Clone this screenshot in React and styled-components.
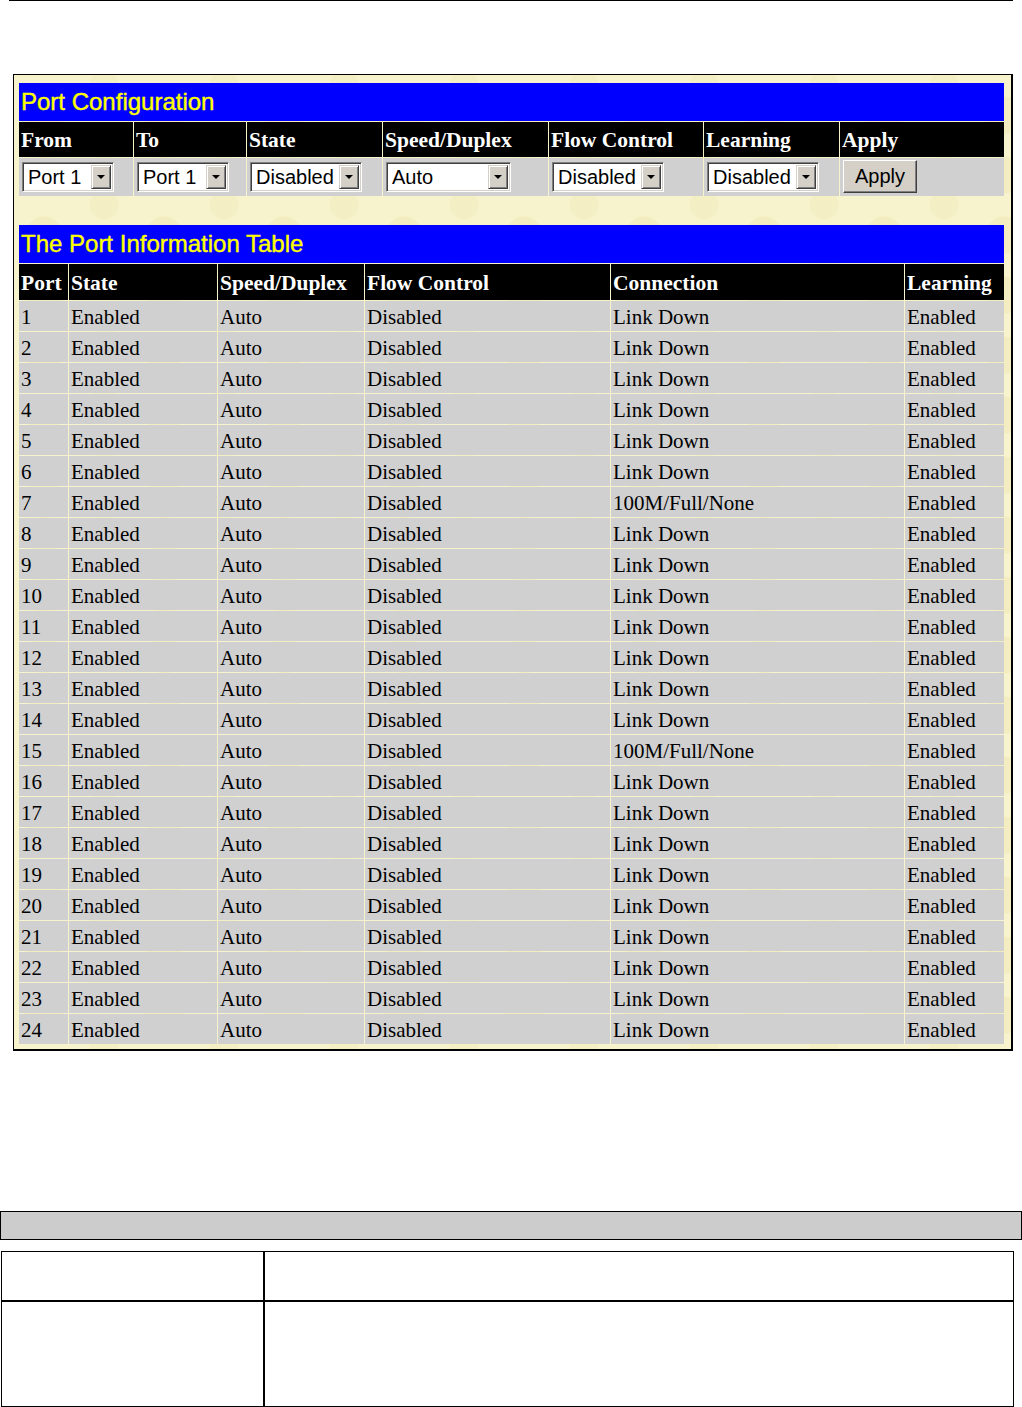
import React from "react";
import styled, { createGlobalStyle } from "styled-components";

const Global = createGlobalStyle`
  html, body { margin: 0; padding: 0; background: #fff; overflow: hidden; }
  body { font-family: "Liberation Serif", serif; }
`;

const Page = styled.div`
  width: 1022px;
  height: 1407px;
  display: flex;
  flex-direction: column;
`;

const TopRule = styled.div`
  margin-left: 9px;
  width: 1004px;
  height: 1px;
  background: #000;
`;

const Panel = styled.div`
  margin: 73px 0 0 13px;
  width: 1000px;
  box-sizing: border-box;
  border-style: solid;
  border-color: #000;
  border-width: 1px 2px 2px 1px;
  padding: 8px 7px 5px 5px;
  background-color: #f7f3cc;
  background-image:
    radial-gradient(circle at 30px 40px, rgba(235,225,170,0.35) 0 18px, transparent 19px),
    radial-gradient(circle at 90px 10px, rgba(235,225,170,0.25) 0 14px, transparent 15px);
  background-size: 120px 60px;
  display: flex;
  flex-direction: column;
`;

const Grid = styled.div`
  display: grid;
  grid-template-columns: ${(p) => p.$cols};
  column-gap: 1px;
  row-gap: 1px;
`;

const TitleBar = styled.div`
  grid-column: 1 / -1;
  height: 38px;
  background: #0000ff;
  color: #ffff00;
  font-family: "Liberation Sans", Arial, sans-serif;
  font-size: 24px;
  -webkit-text-stroke: 0.4px #ffff00;
  display: flex;
  align-items: center;
  padding: 1px 0 0 2px;
  box-sizing: border-box;
`;

const HeadCell = styled.div`
  height: ${(p) => p.$h || 35}px;
  background: #000;
  color: #fff;
  font-family: "Liberation Serif", serif;
  font-weight: bold;
  font-size: 21.5px;
  display: flex;
  align-items: center;
  padding: 3px 0 0 2px;
  box-sizing: border-box;
  white-space: nowrap;
  overflow: hidden;
`;

const CtrlCell = styled.div`
  height: 38px;
  background: #d0d0d0;
  display: flex;
  align-items: center;
  padding: 1px 0 0 3px;
  box-sizing: border-box;
`;

const DataCell = styled.div`
  height: 30px;
  background: #d0d0d0;
  color: #000;
  font-family: "Liberation Serif", serif;
  font-size: 21px;
  display: flex;
  align-items: center;
  padding: 3px 0 0 2px;
  box-sizing: border-box;
  white-space: nowrap;
  overflow: hidden;
`;

const Spacer = styled.div`
  height: ${(p) => p.$h}px;
`;

const SelectBox = styled.div`
  width: ${(p) => p.$w}px;
  height: 30px;
  box-sizing: border-box;
  background: #fff;
  border: 1px solid;
  border-color: #808080 #ffffff #ffffff #808080;
  box-shadow: inset 1px 1px 0 #404040, inset -1px -1px 0 #d4d0c8;
  display: flex;
  align-items: stretch;
  padding: 2px;
  font-family: "Liberation Sans", Arial, sans-serif;
  font-size: 20px;
  color: #000;
`;

const SelectText = styled.span`
  flex: 1;
  display: flex;
  align-items: center;
  padding: 1px 0 0 3px;
  white-space: nowrap;
  overflow: hidden;
`;

const ArrowBtn = styled.span`
  width: 20px;
  box-sizing: border-box;
  background: #d4d0c8;
  border: 1px solid;
  border-color: #d4d0c8 #404040 #404040 #d4d0c8;
  box-shadow: inset 1px 1px 0 #fff, inset -1px -1px 0 #808080;
  display: flex;
  align-items: center;
  justify-content: center;
  &::after {
    content: "";
    width: 0;
    height: 0;
    border-left: 4px solid transparent;
    border-right: 4px solid transparent;
    border-top: 4px solid #000;
  }
`;

const Button = styled.button`
  height: 33px;
  width: 74px;
  margin-top: -2px;
  box-sizing: border-box;
  background: #d4d0c8;
  border: 1px solid;
  border-color: #fff #404040 #404040 #fff;
  box-shadow: inset -1px -1px 0 #808080;
  font-family: "Liberation Sans", Arial, sans-serif;
  font-size: 20px;
  color: #000;
  padding: 1px 0 0 0;
`;

const Select = ({ w, children }) => (
  <SelectBox $w={w}>
    <SelectText>{children}</SelectText>
    <ArrowBtn />
  </SelectBox>
);

const GrayBar = styled.div`
  margin-top: 160px;
  width: 1022px;
  height: 30px;
  box-sizing: border-box;
  background: #cccccc;
  border: 1px solid #000;
`;

const DescTable = styled.div`
  margin: 11px 0 0 1px;
  width: 1013px;
  box-sizing: border-box;
  border: 1px solid #000;
  display: grid;
  grid-template-columns: 263px 1fr;
  grid-template-rows: 48px 106px;
`;

const DescCell = styled.div`
  border-right: ${(p) => (p.$first ? "2px solid #000" : "none")};
  border-top: ${(p) => (p.$top ? "2px solid #000" : "none")};
`;

const cfgCols = "114px 112px 135px 165px 154px 135px 164px";
const infoCols = "49px 148px 146px 245px 293px 99px";

const rows = Array.from({ length: 24 }, (_, i) => ({
  port: i + 1,
  conn: i + 1 === 7 || i + 1 === 15 ? "100M/Full/None" : "Link Down",
}));

export default function App() {
  return (
    <Page>
      <Global />
      <TopRule />
      <Panel>
        <Grid $cols={cfgCols}>
          <TitleBar>Port Configuration</TitleBar>
          {["From", "To", "State", "Speed/Duplex", "Flow Control", "Learning", "Apply"].map((h) => (
            <HeadCell key={h}>{h}</HeadCell>
          ))}
          <CtrlCell><Select w={92}>Port 1</Select></CtrlCell>
          <CtrlCell><Select w={92}>Port 1</Select></CtrlCell>
          <CtrlCell><Select w={112}>Disabled</Select></CtrlCell>
          <CtrlCell><Select w={125}>Auto</Select></CtrlCell>
          <CtrlCell><Select w={112}>Disabled</Select></CtrlCell>
          <CtrlCell><Select w={112}>Disabled</Select></CtrlCell>
          <CtrlCell><Button>Apply</Button></CtrlCell>
        </Grid>
        <Spacer $h={29} />
        <Grid $cols={infoCols}>
          <TitleBar>The Port Information Table</TitleBar>
          {["Port", "State", "Speed/Duplex", "Flow Control", "Connection", "Learning"].map((h) => (
            <HeadCell key={h} $h={36}>{h}</HeadCell>
          ))}
          {rows.map((r) => (
            <React.Fragment key={r.port}>
              <DataCell>{r.port}</DataCell>
              <DataCell>Enabled</DataCell>
              <DataCell>Auto</DataCell>
              <DataCell>Disabled</DataCell>
              <DataCell>{r.conn}</DataCell>
              <DataCell>Enabled</DataCell>
            </React.Fragment>
          ))}
        </Grid>
      </Panel>
      <GrayBar />
      <DescTable>
        <DescCell $first />
        <DescCell />
        <DescCell $first $top />
        <DescCell $top />
      </DescTable>
    </Page>
  );
}
